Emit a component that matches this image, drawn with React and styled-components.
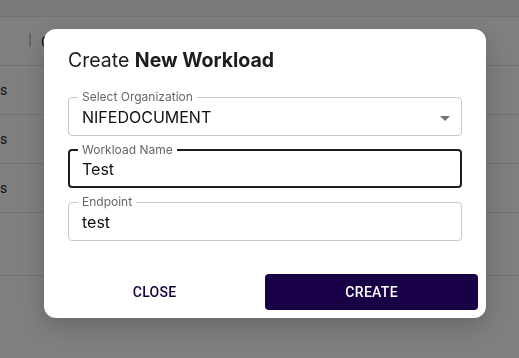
import React from "react";
import styled, { createGlobalStyle } from "styled-components";

const GlobalStyle = createGlobalStyle`
  html, body {
    margin: 0;
    padding: 0;
    background: #ffffff;
    font-family: "Inter", "Roboto", sans-serif;
  }
`;

const Page = styled.div`
  width: 519px;
  height: 358px;
  overflow: hidden;
  background: #fff;
`;

const TopBar = styled.div`
  height: 17px;
  background: #f4f4f4;
  border-bottom: 1px solid #e0e0e0;
  box-sizing: border-box;
`;

const HeaderRow = styled.div`
  height: 49px;
  display: flex;
  align-items: center;
  justify-content: space-between;
  padding: 0 29px;
  border-bottom: 1px solid #e0e0e0;
  box-sizing: border-box;
  font-family: "Roboto", sans-serif;
  font-size: 14px;
  color: #222;
`;

const Divider = styled.span`
  display: inline-block;
  width: 2px;
  height: 14px;
  background: #d0d0d0;
  margin-right: 10px;
`;

const Row = styled.div`
  height: 49px;
  display: flex;
  align-items: center;
  border-bottom: 1px solid #e0e0e0;
  box-sizing: border-box;
  font-family: "Roboto", sans-serif;
  font-size: 14px;
  color: #222;
`;

const Footer = styled.div`
  height: 63px;
  border-bottom: 1px solid #e0e0e0;
  box-sizing: border-box;
`;

const Overlay = styled.div`
  position: fixed;
  inset: 0;
  background: rgba(0, 0, 0, 0.5);
  display: flex;
  align-items: flex-start;
  justify-content: flex-start;
  padding: 29px 0 0 44px;
`;

const Dialog = styled.div`
  width: 442px;
  background: #fff;
  border-radius: 12px;
  box-shadow: 0 8px 24px rgba(0, 0, 0, 0.2);
`;

const Body = styled.div`
  padding: 19px 24px 33px;
  display: flex;
  flex-direction: column;
`;

const Title = styled.h2`
  margin: 0 0 18px;
  font-size: 19.5px;
  line-height: 24px;
  font-weight: 400;
  color: #1d1d1f;
  b {
    font-weight: 700;
  }
`;

const Fields = styled.div`
  display: flex;
  flex-direction: column;
  gap: 7px;
`;

const Field = styled.fieldset`
  position: relative;
  margin: 0;
  min-width: 0;
  padding: 0 ${(p) => (p.$focused ? 12 : 13)}px;
  border: ${(p) => (p.$focused ? "2px solid #1f1f1f" : "1px solid #c8c8c8")};
  border-radius: 4px;
`;

const Legend = styled.legend`
  padding: 0 4px;
  margin-left: -4px;
  font-size: 12px;
  line-height: 14px;
  color: #666;
`;

const Input = styled.input`
  display: block;
  width: 100%;
  box-sizing: border-box;
  border: none;
  outline: none;
  padding: 0;
  margin: ${(p) => (p.$focused ? "2px 0 8px" : "3px 0 9px")};
  height: 19px;
  font-family: "Inter", "Roboto", sans-serif;
  font-size: 16px;
  color: #111;
  background: transparent;
`;

const Arrow = styled.span`
  position: absolute;
  right: 11px;
  top: 12px;
  width: 0;
  height: 0;
  border-left: 5px solid transparent;
  border-right: 5px solid transparent;
  border-top: 5px solid #757575;
`;

const Actions = styled.div`
  display: flex;
  gap: 8px;
  padding: 0 8px 8px;
`;

const Button = styled.button`
  flex: ${(p) => (p.$primary ? 213 : 205)} 1 0;
  height: 36px;
  border: none;
  border-radius: 4px;
  font-family: "Roboto", sans-serif;
  font-weight: 500;
  font-size: 14px;
  letter-spacing: 0.3px;
  text-transform: uppercase;
  cursor: pointer;
  background: ${(p) => (p.$primary ? "#170045" : "transparent")};
  color: ${(p) => (p.$primary ? "#ffffff" : "#170045")};
`;

const rows = ["s", "s", "s"];

const App = () => {
  return (
    <Page>
      <GlobalStyle />
      <TopBar />
      <HeaderRow>
        <span>
          <Divider />C
        </span>
        <Divider />
      </HeaderRow>
      {rows.map((r, i) => (
        <Row key={i}>{r}</Row>
      ))}
      <Footer />
      <Overlay>
        <Dialog>
          <Body>
            <Title>
              Create <b>New Workload</b>
            </Title>
            <Fields>
              <Field>
                <Legend>Select Organization</Legend>
                <Input readOnly defaultValue="NIFEDOCUMENT" />
                <Arrow />
              </Field>
              <Field $focused>
                <Legend>Workload Name</Legend>
                <Input $focused defaultValue="Test" />
              </Field>
              <Field>
                <Legend>Endpoint</Legend>
                <Input defaultValue="test" />
              </Field>
            </Fields>
          </Body>
          <Actions>
            <Button>Close</Button>
            <Button $primary>Create</Button>
          </Actions>
        </Dialog>
      </Overlay>
    </Page>
  );
};

export default App;
